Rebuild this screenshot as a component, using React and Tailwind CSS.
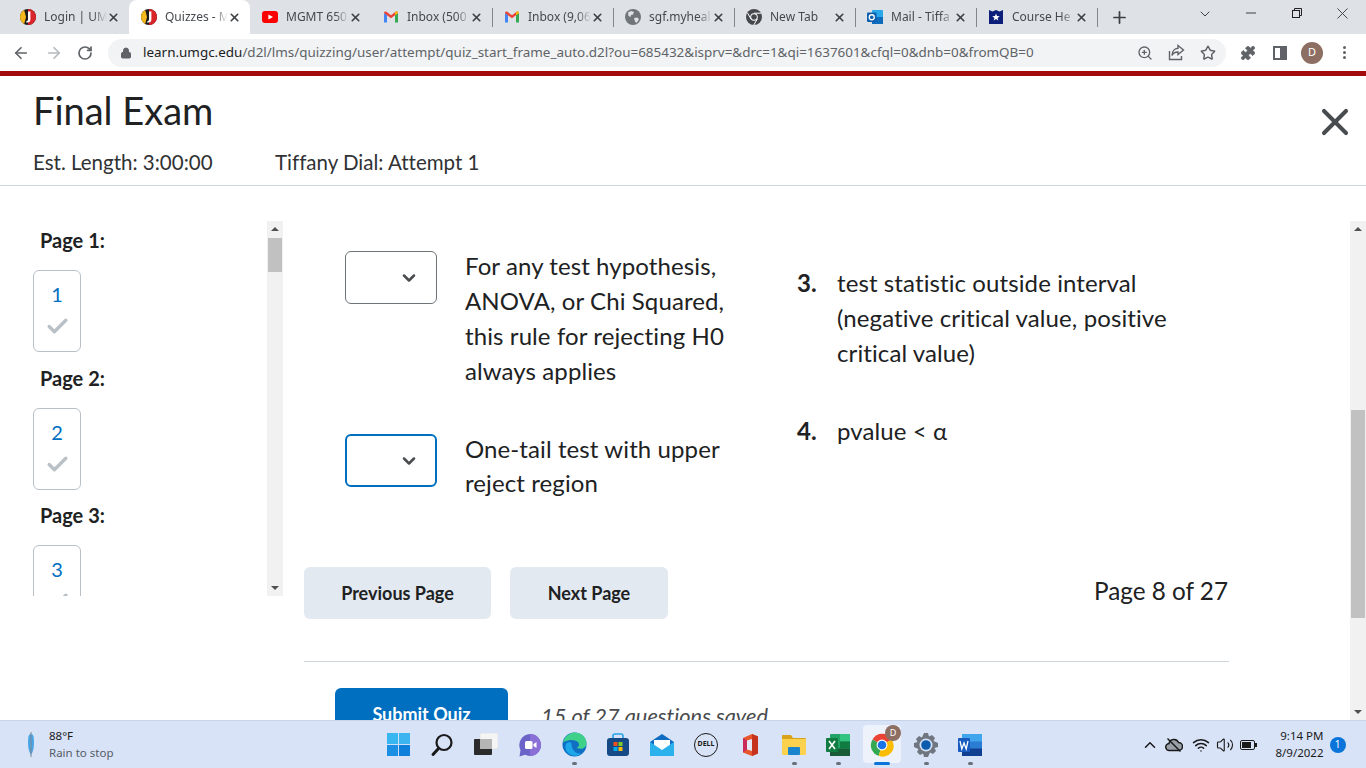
import React from 'react';
import { ArrowLeft, ArrowRight, RotateCw, Lock, ZoomIn, Star, Puzzle, ChevronDown, ChevronUp, X, Plus, Minus, Check, Wifi, Volume2 } from 'lucide-react';

const UmgcIcon = () => (
  <svg width="16" height="16" viewBox="0 0 16 16" className="shrink-0">
    <circle cx="8" cy="8" r="8" fill="#1a1a1a" />
    <path d="M8 0a8 8 0 0 1 0 16z" fill="#d9252a" />
    <path d="M4.200 1A8 8 0 0 0 4.200 15L6 8z" fill="#f5b81c" />
    <path d="M8 2.500h2.400v8a3 3 0 0 1-3 3H6l.6-1.600c1 .1 1.400-.4 1.400-1.400z" fill="#fff" />
  </svg>
);

const YoutubeIcon = () => (
  <svg width="16" height="16" viewBox="0 0 16 16" className="shrink-0">
    <rect y="2" width="16" height="12" rx="3" fill="#f00" />
    <path d="M6.400 5.400v5.200L11 8z" fill="#fff" />
  </svg>
);

const GmailIcon = () => (
  <svg width="16" height="16" viewBox="0 0 16 16" className="shrink-0">
    <path d="M1 13.500V4l3 2v7.500z" fill="#4285f4" />
    <path d="M12 13.500V6l3-2v9.500z" fill="#34a853" />
    <path d="M1 4c0-1.300 1.400-2 2.400-1.200L8 6.300l4.600-3.500C13.600 2 15 2.700 15 4l-7 5.200z" fill="#ea4335" />
    <path d="M12 3.500l.6-.7C13.600 2 15 2.700 15 4l-3 2.200z" fill="#fbbc04" />
  </svg>
);

const GlobeIcon = () => (
  <svg width="16" height="16" viewBox="0 0 16 16" className="shrink-0">
    <circle cx="8" cy="8" r="8" fill="#70757a" />
    <path d="M3 3.500l3-1.500 3 1-1 2.500-2 .5-.5 2L3.500 7zM9 9l3.500-.5 1.500 2-2.500 3.500-1.500-1.500z" fill="#dee1e6" />
  </svg>
);

const ChromeDarkIcon = () => (
  <svg width="16" height="16" viewBox="0 0 16 16" className="shrink-0">
    <circle cx="8" cy="8" r="8" fill="#45494d" />
    <circle cx="8" cy="8" r="3.800" fill="#fff" />
    <circle cx="8" cy="8" r="2.800" fill="#45494d" />
    <path d="M8 4.200h7M5 10l-3.500-6M11.300 10l-3.500 6" stroke="#fff" strokeWidth="1" />
  </svg>
);

const OutlookIcon = () => (
  <svg width="16" height="16" viewBox="0 0 16 16" className="shrink-0">
    <rect x="5" y="1" width="11" height="14" rx="1" fill="#28a8ea" />
    <rect x="5" y="8" width="11" height="7" fill="#0f6cbd" />
    <rect y="3.500" width="9.500" height="9.500" rx="1" fill="#0f5fb0" />
    <circle cx="4.750" cy="8.250" r="2.500" fill="none" stroke="#fff" strokeWidth="1.300" />
  </svg>
);

const ShieldIcon = () => (
  <svg width="16" height="16" viewBox="0 0 16 16" className="shrink-0">
    <path d="M1 1l3.500 1.500L8 1l3.500 1.500L15 1v14H1z" fill="#0b1f7a" />
    <path d="M8 4.500l1 2.600 2.800.1-2.200 1.700.8 2.700L8 10l-2.400 1.600.8-2.700-2.200-1.700L7 7.100z" fill="#fff" />
  </svg>
);

const tabs = [
  { icon: UmgcIcon, label: 'Login | UM' },
  { icon: UmgcIcon, label: 'Quizzes - M', active: true },
  { icon: YoutubeIcon, label: 'MGMT 650' },
  { icon: GmailIcon, label: 'Inbox (500', sep: true },
  { icon: GmailIcon, label: 'Inbox (9,06', sep: true },
  { icon: GlobeIcon, label: 'sgf.myheal', sep: true },
  { icon: ChromeDarkIcon, label: 'New Tab', sep: true },
  { icon: OutlookIcon, label: 'Mail - Tiffa', sep: true },
  { icon: ShieldIcon, label: 'Course He', sep: true },
];

const Tab = ({ tab }) => {
  const Icon = tab.icon;
  return (
    <div className={`relative flex h-[34px] w-[121px] shrink-0 items-center pl-3 pr-[9px] ${tab.active ? 'rounded-t-lg bg-white' : ''}`}>
      <Icon />
      <span className="ml-2 w-[63px] overflow-hidden whitespace-nowrap text-[12px] text-[#45494e] [mask-image:linear-gradient(to_right,black_78%,transparent)]">
        {tab.label}
      </span>
      <X className="ml-auto h-[13px] w-[13px] text-[#3c4043]" strokeWidth={3} />
      {tab.sep && <span className="absolute -right-px top-2 h-[19px] w-px bg-[#80868b]" />}
    </div>
  );
};

const TabBar = () => (
  <div className="flex h-[34px] shrink-0 items-center bg-[#dee1e6] pl-2">
    {tabs.map(tab => <Tab key={tab.label} tab={tab} />)}
    <Plus className="ml-[13px] h-[19px] w-[19px] text-[#3c4043]" strokeWidth={2.200} />
    <ChevronDown className="ml-[68px] mb-[6px] h-4 w-4 text-[#3c4043]" strokeWidth={1.500} />
    <Minus className="ml-[30px] mb-2 h-4 w-4 text-[#3c4043]" strokeWidth={1.500} />
    <svg width="12" height="12" viewBox="0 0 12 12" className="ml-[32px] mb-2 text-[#202124]" fill="none" stroke="currentColor">
      <rect x="1.500" y="3.500" width="7" height="7" />
      <path d="M3.500 3.500v-2h7v7h-2" />
    </svg>
    <X className="ml-[30px] mb-2 h-[19px] w-[19px] text-[#3c4043]" strokeWidth={1.200} />
  </div>
);

const ShareIcon = () => (
  <svg width="17" height="17" viewBox="0 0 17 17" fill="none" stroke="#5f6368" strokeWidth="1.400" className="ml-[15px] shrink-0">
    <path d="M1.500 7v8.500h12V12" />
    <path d="M10 1.500l5.500 4.500-5.500 4.500V8c-3 0-5 1-6 3.500C4 7.500 6.500 4.500 10 4.300z" />
  </svg>
);

const Toolbar = () => (
  <div className="flex h-[37px] shrink-0 items-center bg-white pl-[12px]">
    <ArrowLeft className="h-[18px] w-[18px] text-[#5f6368]" strokeWidth={2.200} />
    <ArrowRight className="ml-[15px] h-[18px] w-[18px] text-[#b5b8bc]" strokeWidth={2.200} />
    <RotateCw className="ml-[14px] h-[16px] w-[16px] text-[#5f6368]" strokeWidth={2.600} />
    <div className="ml-[15px] flex h-[28px] w-[1118px] items-center rounded-full bg-[#f1f3f4] pl-[12px] pr-[10px]">
      <Lock className="h-[12px] w-[12px] fill-[#5f6368] text-[#5f6368]" strokeWidth={2} />
      <span className="ml-[11px] whitespace-nowrap text-[13.450px] text-[#5f6368]">
        <span className="text-[#202124]">learn.umgc.edu</span>/d2l/lms/quizzing/user/attempt/quiz_start_frame_auto.d2l?ou=685432&isprv=&drc=1&qi=1637601&cfql=0&dnb=0&fromQB=0
      </span>
      <ZoomIn className="ml-auto h-[16px] w-[16px] text-[#5f6368]" strokeWidth={2} />
      <ShareIcon />
      <Star className="ml-[15px] h-[16px] w-[16px] text-[#5f6368]" strokeWidth={2.200} />
    </div>
    <Puzzle className="ml-[14px] h-4 w-4 fill-[#5f6368] text-[#5f6368]" strokeWidth={1} />
    <div className="ml-[17px] flex h-[14px] w-[14px] border-2 border-[#5f6368]">
      <span className="ml-auto h-full w-[5px] bg-[#5f6368]" />
    </div>
    <div className="ml-[14px] flex h-[22px] w-[22px] items-center justify-center rounded-full bg-[#8d6e63] text-[11px] text-white">D</div>
    <div className="ml-[20px] flex flex-col gap-[2px]">
      <span className="h-[3px] w-[3px] rounded-full bg-[#5f6368]" />
      <span className="h-[3px] w-[3px] rounded-full bg-[#5f6368]" />
      <span className="h-[3px] w-[3px] rounded-full bg-[#5f6368]" />
    </div>
  </div>
);

const pages = [
  { n: 1, head: 'mt-[7px]' },
  { n: 2, head: 'mt-[13.5px]' },
  { n: 3, head: 'mt-[13.5px]' },
];

const Scrollbar = ({ thumb }) => (
  <div className="flex h-full w-4 shrink-0 flex-col items-center bg-[#f1f1f1]">
    <span className="mt-[6px] h-0 w-0 border-x-4 border-b-[4px] border-x-transparent border-b-[#505050]" />
    <span className={`w-[14px] bg-[#c1c1c1] ${thumb}`} />
    <span className="mb-[6px] mt-auto h-0 w-0 border-x-4 border-t-[4px] border-x-transparent border-t-[#505050]" />
  </div>
);

const Sidebar = () => (
  <div className="mt-[35px] flex h-[375px] w-[283px] shrink-0">
    <div className="h-full w-[267px] overflow-hidden pl-[33px]">
      {pages.map(p => (
        <div key={p.n}>
          <div className={`pl-[7px] text-[20px] font-bold leading-[24px] text-[#202122] ${p.head}`}>Page {p.n}:</div>
          <div className="mt-[18px] flex h-[82px] w-[48px] flex-col items-center rounded-md border border-[#b8c0c8] pt-[10px]">
            <span className="text-[20px] leading-[26px] text-[#006fbf]">{p.n}</span>
            <Check className="mt-[7px] h-[25px] w-[25px] shrink-0 text-[#b9c1c7]" strokeWidth={3.200} />
          </div>
        </div>
      ))}
    </div>
    <Scrollbar thumb="mt-[7px] h-[34px]" />
  </div>
);

const Select = ({ focused }) => (
  <div className={`flex h-[53px] w-[92px] shrink-0 items-center justify-end rounded-md bg-white ${focused ? 'border-2 border-[#006fbf] pr-[16px]' : 'border border-[#6e7477] pr-[17px]'}`}>
    <ChevronDown className="mt-px h-[20px] w-[20px] text-[#494c4e]" strokeWidth={3} />
  </div>
);

const Question = () => (
  <div className="flex pl-[41px] pt-[65px] text-[24px] leading-[35px] tracking-[0.1px] text-[#202122]">
    <div className="w-[452px] shrink-0">
      <div className="flex gap-[28px]">
        <Select />
        <p className="-mt-[3px] w-[280px]">For any test hypothesis, ANOVA, or Chi Squared, this rule for rejecting H0 always applies</p>
      </div>
      <div className="mt-[46px] flex gap-[28px]">
        <Select focused />
        <p className="-mt-[2px] w-[280px] leading-[34px]">One-tail test with upper reject region</p>
      </div>
    </div>
    <div className="pt-[14px]">
      <div className="flex">
        <span className="w-[40px] shrink-0 font-bold">3.</span>
        <p className="w-[350px]">test statistic outside interval (negative critical value, positive critical value)</p>
      </div>
      <div className="mt-[43px] flex">
        <span className="w-[40px] shrink-0 font-bold">4.</span>
        <p>pvalue &lt; α</p>
      </div>
    </div>
  </div>
);

const Pager = () => (
  <div className="mt-[67px] flex items-center gap-[19px]">
    <button className="h-[52px] w-[187px] rounded-md bg-[#e3e9f1] text-[18px] font-bold text-[#202122]">Previous Page</button>
    <button className="h-[52px] w-[158px] rounded-md bg-[#e3e9f1] text-[18px] font-bold text-[#202122]">Next Page</button>
    <span className="mb-[3px] ml-auto pr-px text-[24.300px] text-[#202122]">Page 8 of 27</span>
  </div>
);

const Content = () => (
  <div className="ml-[21px] w-[925px] shrink-0 overflow-hidden">
    <Question />
    <Pager />
    <div className="mt-[42px] h-px bg-[#cdd5dc]" />
    <div className="ml-[31px] mt-[26px] flex items-center gap-[33px]">
      <button className="h-[52px] w-[173px] rounded-md bg-[#006fbf] text-[18px] font-bold text-white">Submit Quiz</button>
      <span className="pt-[4px] text-[21.800px] italic text-[#494c4e]">15 of 27 questions saved</span>
    </div>
  </div>
);

const Header = () => (
  <div className="relative h-[110px] shrink-0 border-b border-[#cdd5dc] pl-[33px] pt-[11px]">
    <h1 className="text-[38px] leading-[46px] text-[#202122]">Final Exam</h1>
    <div className="mt-[16px] flex text-[20.500px] leading-[26px] text-[#303234]">
      <span className="w-[242px]">Est. Length: 3:00:00</span>
      <span>Tiffany Dial: Attempt 1</span>
    </div>
    <X className="absolute right-[9px] top-[24px] h-[44px] w-[44px] text-[#494c4e]" strokeWidth={2.200} />
  </div>
);

const WindowsLogo = () => (
  <svg width="23" height="23" viewBox="0 0 24 24">
    <rect width="11.500" height="11.500" fill="#38b6f0" />
    <rect x="12.500" width="11.500" height="11.500" fill="#3bb4ef" />
    <rect y="12.500" width="11.500" height="11.500" fill="#1a8fe3" />
    <rect x="12.500" y="12.500" width="11.500" height="11.500" fill="#0f7fdc" />
  </svg>
);

const SearchLogo = () => (
  <svg width="24" height="24" viewBox="0 0 24 24" fill="none" stroke="#1a1a1a">
    <circle cx="14" cy="9.500" r="7.500" strokeWidth="2.200" />
    <path d="M8.500 15.500l-5.500 6" strokeWidth="3" strokeLinecap="round" />
  </svg>
);

const TaskViewLogo = () => (
  <svg width="24" height="24" viewBox="0 0 24 24">
    <rect x="6" width="18" height="16" rx="1" fill="#f5f5f5" stroke="#d5d5d5" strokeWidth="0.500" />
    <rect y="6" width="18" height="16" rx="1" fill="#2b2b2b" />
    <rect x="6" y="6" width="12" height="10" fill="#b5b5b5" />
  </svg>
);

const TeamsLogo = () => (
  <svg width="24" height="24" viewBox="0 0 24 24">
    <path d="M12 1a11 11 0 1 1-5 20.800L1.500 23.500 2.500 17A11 11 0 0 1 12 1z" fill="#6c63c9" />
    <path d="M12 1a11 11 0 0 1 0 22z" fill="#8a6fd6" />
    <rect x="7" y="8" width="7.500" height="8" rx="1.500" fill="#fff" />
    <path d="M15.500 11l3-2v6l-3-2z" fill="#fff" />
  </svg>
);

const EdgeLogo = () => (
  <svg width="25" height="25" viewBox="0 0 26 26">
    <circle cx="13" cy="13" r="12.500" fill="#0f6fc5" />
    <path d="M1 11C3 3 10 .5 13 .5c7 0 12.500 5 12.500 11 0 4-3 6-6 6-2.500 0-4-1-4-1 2.500-1 3-4 1-6-3-3-11-3-15.500.5z" fill="#3fd08a" />
    <path d="M10 13c0 5 4 10 10 9.500-4 3.500-11 3-15-2-2-3-2-7 0-9 2-1.500 5-1 5 1.500z" fill="#1ea7e8" />
  </svg>
);

const StoreLogo = () => (
  <svg width="24" height="24" viewBox="0 0 24 24">
    <path d="M7 5V3a2 2 0 0 1 2-2h6a2 2 0 0 1 2 2v2" fill="none" stroke="#27a3e6" strokeWidth="1.600" />
    <rect x="1" y="5" width="22" height="18" rx="3" fill="#154a86" />
    <rect x="7.500" y="9" width="4" height="4" fill="#f1511b" />
    <rect x="12.500" y="9" width="4" height="4" fill="#80cc28" />
    <rect x="7.500" y="14" width="4" height="4" fill="#00adef" />
    <rect x="12.500" y="14" width="4" height="4" fill="#fbbc09" />
  </svg>
);

const MailLogo = () => (
  <svg width="24" height="24" viewBox="0 0 24 24">
    <path d="M12 1l12 8v14H0V9z" fill="#0f6cc0" />
    <path d="M4 7h16v8l-8 5-8-5z" fill="#fff" />
    <path d="M0 9l12 8 12-8v14H0z" fill="#2bb2ec" />
  </svg>
);

const DellLogo = () => (
  <div className="flex h-6 w-6 items-center justify-center rounded-full border-[1.500px] border-[#1a1a1a] text-[7px] font-bold text-[#1a1a1a]">DELL</div>
);

const OfficeLogo = () => (
  <svg width="24" height="24" viewBox="0 0 24 24">
    <path d="M14 1l6 2.500v17L14 23l-9-3.500V5z" fill="#e8552a" />
    <path d="M9 7.500L14 6v12l-5-1.500z" fill="#e3e9f8" />
    <path d="M14 1l6 2.500v17L14 23z" fill="#c5321e" />
    <path d="M5 5l4 2.500v9L5 19.500z" fill="#c92a5a" />
  </svg>
);

const FolderLogo = () => (
  <svg width="24" height="24" viewBox="0 0 24 24">
    <path d="M0 3a1 1 0 0 1 1-1h8l2 3h12a1 1 0 0 1 1 1v3H0z" fill="#d9a21b" />
    <path d="M0 6h24v15a1 1 0 0 1-1 1H1a1 1 0 0 1-1-1z" fill="#fcd14d" />
    <rect x="6" y="14" width="12" height="8" rx="1" fill="#1a84cf" />
  </svg>
);

const ExcelLogo = () => (
  <svg width="24" height="24" viewBox="0 0 24 24">
    <rect x="4" y="1" width="20" height="22" rx="1" fill="#21a366" />
    <rect x="14" y="1" width="10" height="7.500" fill="#33c481" />
    <rect x="4" y="15.500" width="20" height="7.500" fill="#185c37" />
    <rect x="14" y="8.500" width="10" height="7" fill="#107c41" />
    <rect y="5" width="12" height="14" rx="1" fill="#107c41" />
    <path d="M3 8l6 8M9 8l-6 8" stroke="#fff" strokeWidth="1.600" />
  </svg>
);

const ChromeLogo = () => (
  <svg width="26" height="26" viewBox="0 0 24 24">
    <path d="M12 12L3.300 7A10 10 0 0 1 21 7z" fill="#ea4335" />
    <path d="M12 12l-8.700-5A10 10 0 0 0 9 22z" fill="#34a853" />
    <path d="M12 12l9-5a10 10 0 0 1-12 15z" fill="#fbbc04" />
    <circle cx="12" cy="12" r="5" fill="#fff" />
    <circle cx="12" cy="12" r="4" fill="#1a73e8" />
  </svg>
);

const SettingsLogo = () => (
  <svg width="24" height="24" viewBox="0 0 24 24">
    <path d="M10 0h4l1 3.500 3-1.500 3 3-1.500 3L24 10v4l-3.500 1 1.500 3-3 3-3-1.500L14 24h-4l-1-3.500L6 22l-3-3 1.500-3L0 14v-4l3.500-1L2 6l3-3 3 1.500z" fill="#6f7680" />
    <circle cx="12" cy="12" r="6.500" fill="#d6e2f6" />
    <circle cx="12" cy="12" r="4.800" fill="#0b5cad" />
  </svg>
);

const WordLogo = () => (
  <svg width="24" height="24" viewBox="0 0 24 24">
    <rect x="4" y="1" width="20" height="22" rx="1" fill="#2b7cd3" />
    <rect x="4" y="1" width="20" height="7.500" fill="#41a5ee" />
    <rect x="4" y="15.500" width="20" height="7.500" fill="#103f91" />
    <rect y="5" width="12" height="14" rx="1" fill="#185abd" />
    <path d="M2 8l1.800 8 2.200-6 2.200 6L10 8" stroke="#fff" strokeWidth="1.300" fill="none" />
  </svg>
);

const CloudOffIcon = () => (
  <svg width="18" height="16" viewBox="0 0 18 16" className="ml-[6px] shrink-0">
    <path d="M4.500 13.500a3.500 3.500 0 0 1-.5-7A5 5 0 0 1 13.500 5.500a4 4 0 0 1 0 8z" fill="#9aa0a8" stroke="#1a1a1a" strokeWidth="1.500" />
    <path d="M2.500 1.500l13 13" stroke="#1a1a1a" strokeWidth="1.500" />
  </svg>
);

const taskbarApps = [
  { id: 'win', Logo: WindowsLogo },
  { id: 'search', Logo: SearchLogo },
  { id: 'tasks', Logo: TaskViewLogo },
  { id: 'teams', Logo: TeamsLogo },
  { id: 'edge', Logo: EdgeLogo, dot: true },
  { id: 'store', Logo: StoreLogo },
  { id: 'mail', Logo: MailLogo },
  { id: 'dell', Logo: DellLogo },
  { id: 'office', Logo: OfficeLogo },
  { id: 'folder', Logo: FolderLogo, dot: true },
  { id: 'excel', Logo: ExcelLogo, dot: true },
  { id: 'chrome', Logo: ChromeLogo, active: true },
  { id: 'settings', Logo: SettingsLogo, dot: true },
  { id: 'word', Logo: WordLogo, dot: true },
];

const Taskbar = () => (
  <div className="flex h-[48px] shrink-0 items-center border-t border-[#c8d4e8] bg-[#d8e3f7]">
    <svg width="12" height="28" viewBox="0 0 12 28" className="ml-[25px] shrink-0">
      <path d="M6 3C3 3 3 8 3 12c0 5 1 9 3 12 2-3 3-7 3-12 0-4 0-9-3-9z" fill="#4aa5e6" />
      <path d="M6 1v25" stroke="#7a8794" strokeWidth="1" />
    </svg>
    <div className="ml-3 flex w-[100px] flex-col pb-px text-[11.500px] leading-[17px]">
      <span className="text-[#1a1a1a]">88°F</span>
      <span className="text-[#555b66]">Rain to stop</span>
    </div>
    <div className="ml-[227px] flex items-center">
      {taskbarApps.map(({ id, Logo, dot, active }) => (
        <div key={id} className="relative flex h-[44px] w-[44px] shrink-0 items-center justify-center">
          {active && <span className="absolute left-[3px] top-[2px] h-[38px] w-[38px] rounded bg-[#eef3fb]" />}
          <div className="relative flex h-[26px] items-center"><Logo /></div>
          {active && (
            <span className="absolute right-[3px] top-[2px] flex h-[16px] w-[16px] items-center justify-center rounded-full bg-[#8d6e63] text-[9px] text-white">D</span>
          )}
          {active && <span className="absolute bottom-[2px] h-[3px] w-[16px] rounded bg-[#0a74da]" />}
          {dot && <span className="absolute bottom-[2px] h-[3px] w-[5px] rounded bg-[#6a7079]" />}
        </div>
      ))}
    </div>
    <ChevronUp className="ml-[149px] h-[18px] w-[18px] text-[#1a1a1a]" strokeWidth={2} />
    <CloudOffIcon />
    <Wifi className="ml-[9px] h-[18px] w-[18px] text-[#1a1a1a]" strokeWidth={2} />
    <Volume2 className="ml-[6px] h-[18px] w-[18px] text-[#1a1a1a]" strokeWidth={1.500} />
    <div className="ml-[6px] flex h-[10px] w-[15px] items-center rounded-[2px] border border-[#1a1a1a] p-px">
      <span className="h-full w-[9px] bg-[#1a1a1a]" />
    </div>
    <span className="h-[4px] w-[1.500px] bg-[#1a1a1a]" />
    <div className="ml-[15px] flex w-[52px] flex-col items-end whitespace-nowrap pb-[2px] text-[11.500px] leading-[17px] text-[#1a1a1a]">
      <span>9:14 PM</span>
      <span>8/9/2022</span>
    </div>
    <span className="ml-[6px] flex h-[16px] w-[16px] items-center justify-center rounded-full bg-[#0a74da] text-[10px] text-white">1</span>
  </div>
);

export default function App() {
  return (
    <div className="flex h-[768px] w-[1366px] flex-col overflow-hidden bg-white font-['Noto_Sans',sans-serif]">
      <TabBar />
      <Toolbar />
      <div className="h-[5px] shrink-0 bg-[#a30b0b]" />
      <div className="flex min-h-0 flex-1 flex-col font-['Lato',sans-serif] [font-variant-ligatures:none]">
        <Header />
        <div className="flex min-h-0 flex-1">
          <Sidebar />
          <Content />
          <div className="ml-auto mt-[35px] h-[499px]">
            <Scrollbar thumb="mt-[179px] h-[208px]" />
          </div>
        </div>
      </div>
      <Taskbar />
    </div>
  );
}
